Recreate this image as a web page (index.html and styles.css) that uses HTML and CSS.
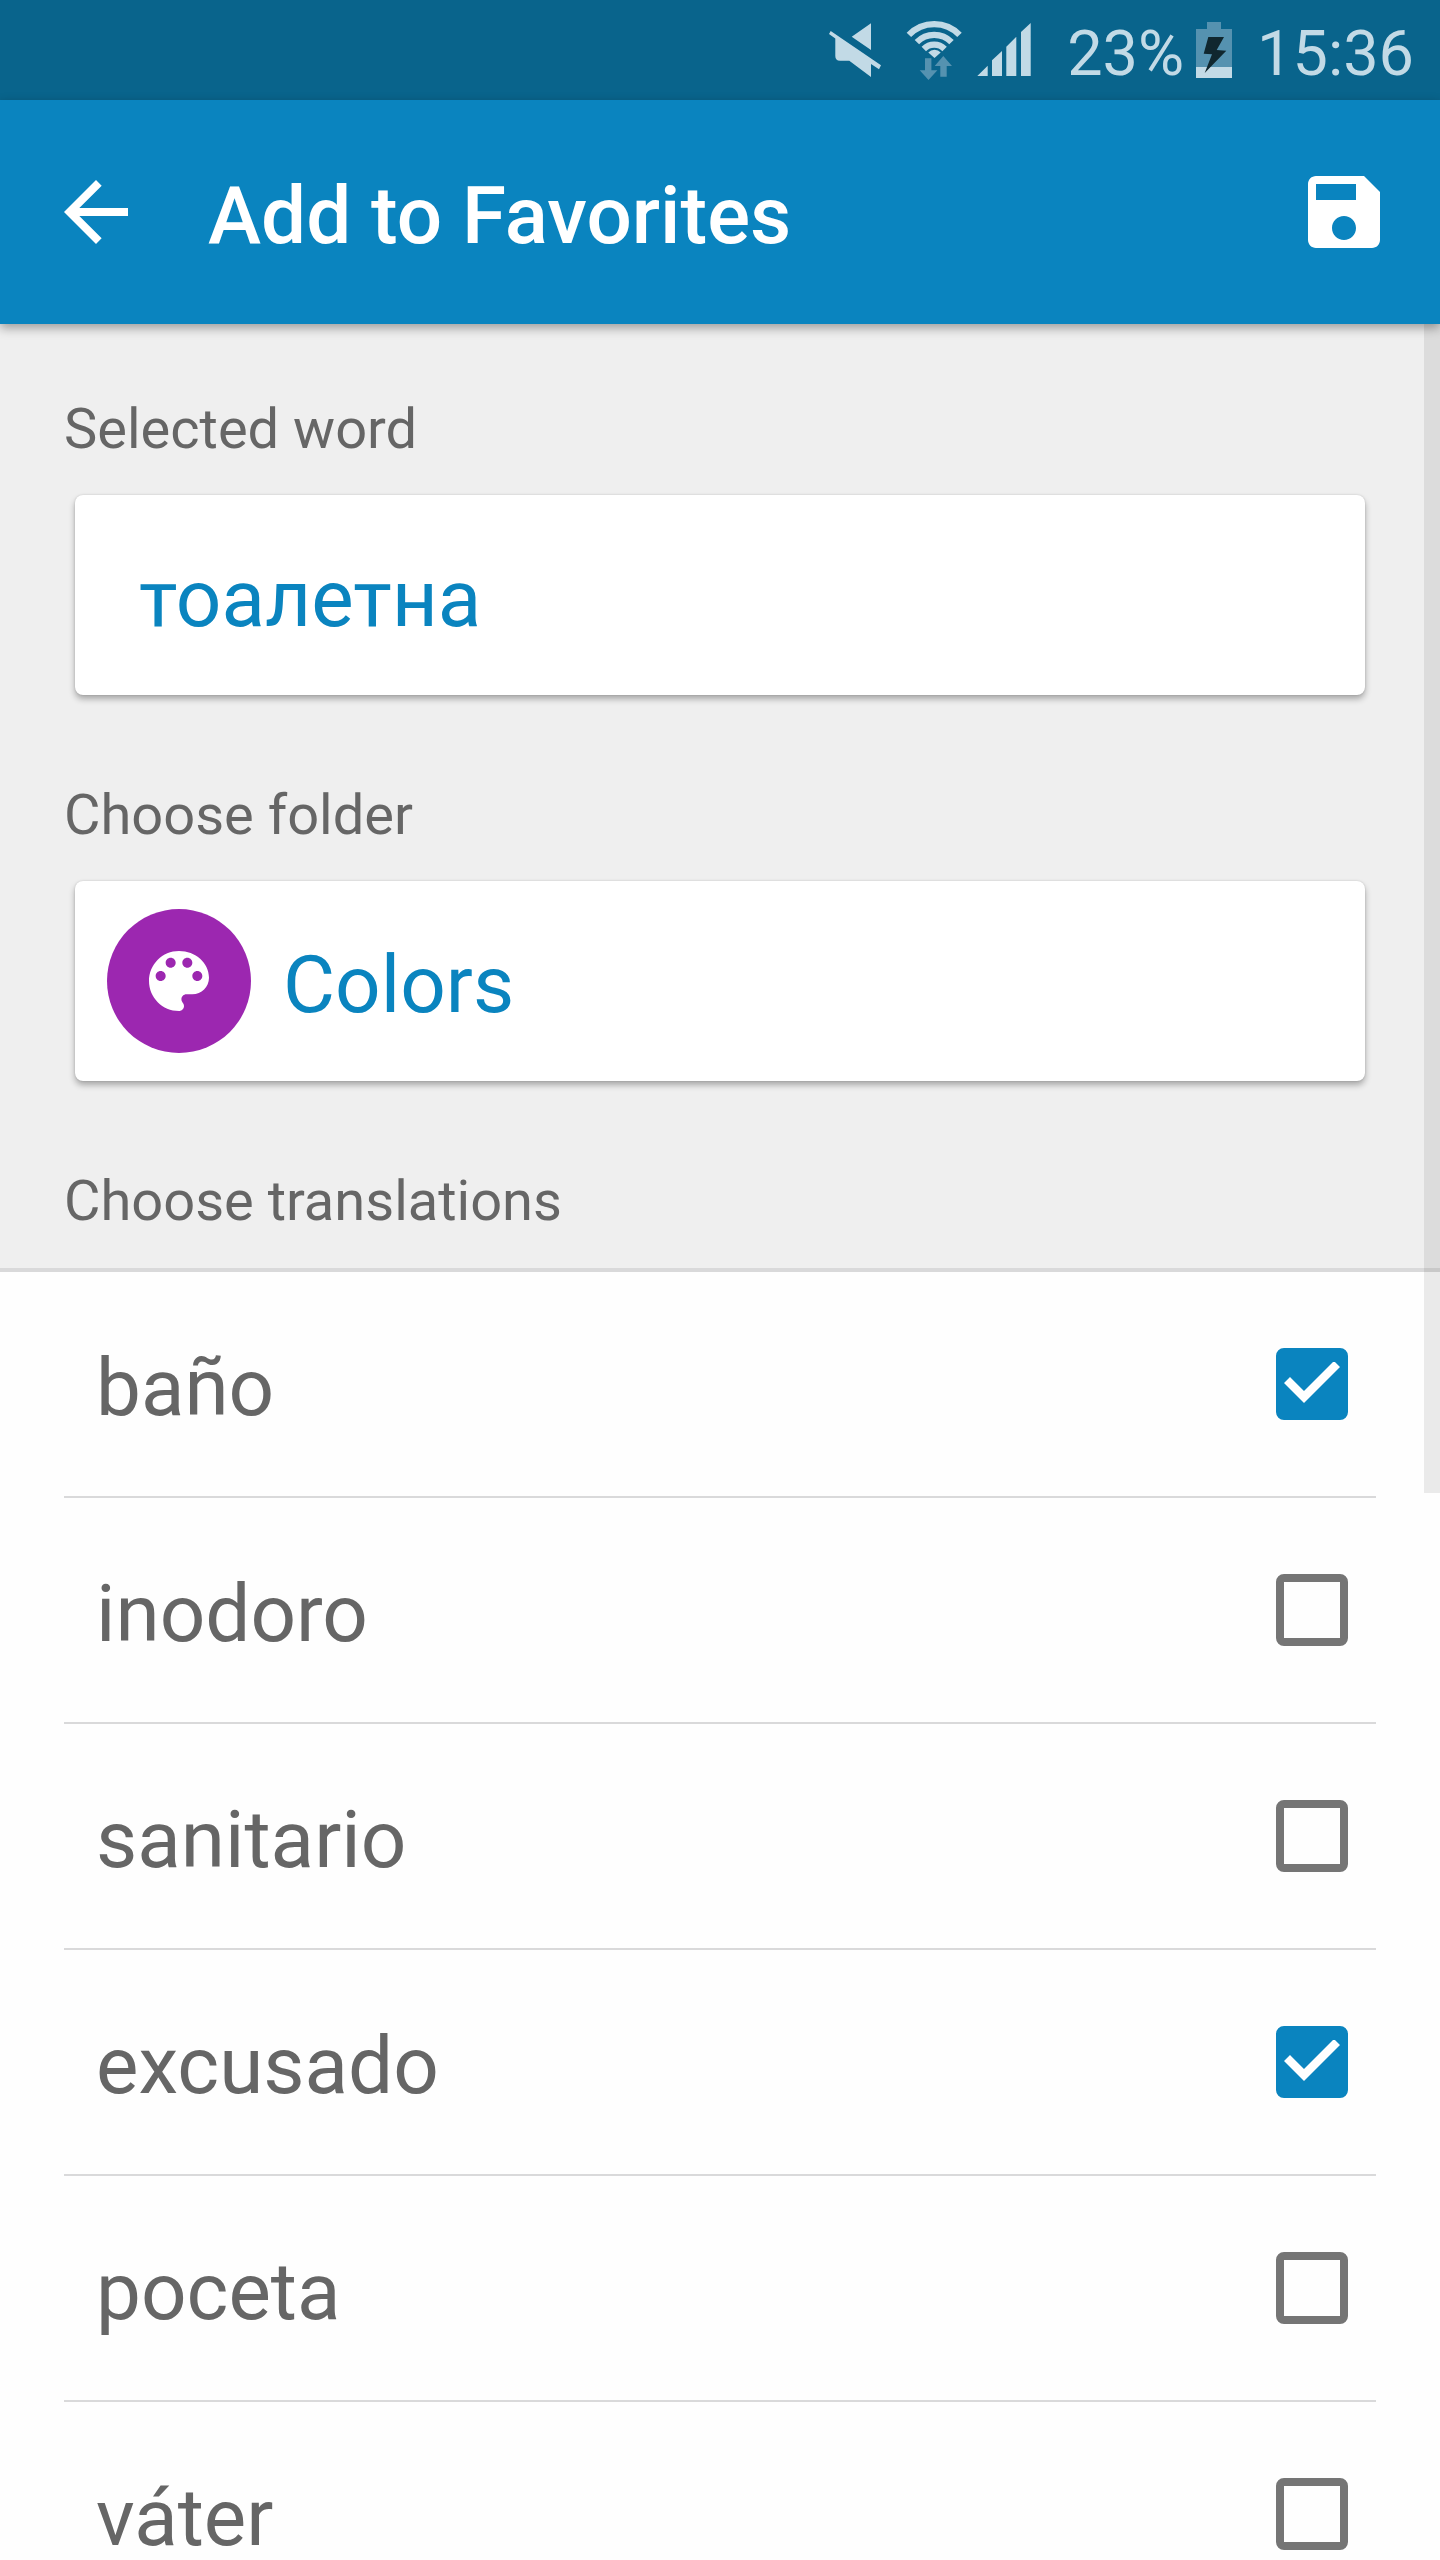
FILE: index.html
```html
<!DOCTYPE html>
<html lang="en">
<head>
<meta charset="utf-8">
<meta name="viewport" content="width=device-width, initial-scale=1">
<title>Add to Favorites</title>
<link rel="stylesheet" href="styles.css">
</head>
<body>
<div class="status-bar">
  <div class="status-icons">
    <svg width="54" height="60" viewBox="0 0 54 60" fill="currentColor" aria-hidden="true">
      <path d="M43 3.3V30L23.7 16.7zM2.7 11 53 45.3 51 49.3 43 44V57L21.3 40.7H12Q7.3 40.7 7.3 36V18.5L1 14z"/>
    </svg>
    <svg class="wifi" width="56" height="64" viewBox="0 0 56 64" aria-hidden="true">
      <g fill="none" stroke="currentColor" stroke-width="6.2">
        <path d="M2.9 16.9A35 35 0 0 1 53.5 16.9"/>
        <path d="M10.9 24.1A24.2 24.2 0 0 1 45.5 24.1"/>
        <path d="M17.8 31A14.6 14.6 0 0 1 38.6 31"/>
      </g>
      <path fill="currentColor" d="M28.5 40 22.3 34.6A8.4 8.4 0 0 1 34.7 34.6z"/>
      <path class="dim" d="M19 40.3h6.4v12h6L22.5 62l-8.8-9.700H19zM34.300 58.700V48h-5.600L37.300 38 46 48h-5.300v10.700z"/>
    </svg>
    <svg class="signal" width="54" height="54" viewBox="0 0 54 54" fill="currentColor" aria-hidden="true">
      <path d="M.3 53 10.700 42.700V53zM15 37.300 25 28V53H15zM29.300 23.700 39.300 13.700V53h-10zM44 9 53.700 0V53H44z"/>
    </svg>
  </div>
  <span class="status-text">23%</span>
  <svg class="battery" width="36" height="58" viewBox="0 0 36 58" aria-hidden="true">
    <path class="dim" d="M11 1h14v7h11v38H0V8h11z"/>
    <path fill="currentColor" d="M0 46h36v11H0z"/>
    <path class="bolt" d="M12.300 16H28L20.700 29l9.600.7L8.700 52 16 33.300l-8.300-.6z"/>
  </svg>
  <span class="status-text">15:36</span>
</div>

<header class="app-bar">
  <button class="icon-button" type="button" aria-label="Back">
    <svg width="96" height="96" viewBox="0 0 24 24" fill="currentColor" aria-hidden="true"><path d="M20 11H7.830l5.590-5.590L12 4l-8 8 8 8 1.410-1.410L7.830 13H20v-2z"/></svg>
  </button>
  <h1 class="title">Add to Favorites</h1>
  <button class="icon-button" type="submit" form="favorite" aria-label="Save">
    <svg width="96" height="96" viewBox="0 0 24 24" fill="currentColor" aria-hidden="true"><path d="M17 3H5c-1.110 0-2 .9-2 2v14c0 1.100.89 2 2 2h14c1.100 0 2-.9 2-2V7l-4-4zm-5 16c-1.660 0-3-1.340-3-3s1.340-3 3-3 3 1.340 3 3-1.340 3-3 3zm3-10H5V5h10v4z"/></svg>
  </button>
</header>

<main class="content">
  <form id="favorite">
    <div class="fields">
      <label class="label" for="word">Selected word</label>
      <div class="card card-word">
        <input class="field" id="word" type="text" value="тоалетна">
      </div>
      <label class="label" for="folder">Choose folder</label>
      <div class="card card-folder">
        <span class="folder-icon">
          <svg width="80" height="80" viewBox="0 0 24 24" fill="currentColor" aria-hidden="true"><path d="M12 3c-4.970 0-9 4.030-9 9s4.030 9 9 9c.83 0 1.500-.67 1.500-1.500 0-.39-.15-.74-.39-1.010-.23-.26-.38-.61-.38-.99 0-.83.67-1.500 1.500-1.500H16c2.760 0 5-2.240 5-5 0-4.420-4.030-8-9-8zm-5.500 9c-.83 0-1.500-.67-1.500-1.500S5.670 9 6.500 9 8 9.670 8 10.500 7.330 12 6.500 12zm3-4C8.670 8 8 7.330 8 6.500S8.670 5 9.500 5s1.500.67 1.500 1.500S10.330 8 9.500 8zm5 0c-.83 0-1.500-.67-1.500-1.500S13.670 5 14.500 5s1.500.67 1.500 1.500S15.330 8 14.500 8zm3 4c-.83 0-1.500-.67-1.500-1.500S16.670 9 17.500 9s1.500.67 1.500 1.500-.67 1.500-1.500 1.500z"/></svg>
        </span>
        <select class="field" id="folder">
          <option>Colors</option>
        </select>
      </div>
      <h2 class="label label-last">Choose translations</h2>
    </div>
    <ul class="translations">
      <li><label class="row"><span class="row-text">baño</span><input class="check" type="checkbox" checked></label></li>
      <li><label class="row"><span class="row-text">inodoro</span><input class="check" type="checkbox"></label></li>
      <li><label class="row"><span class="row-text">sanitario</span><input class="check" type="checkbox"></label></li>
      <li><label class="row"><span class="row-text">excusado</span><input class="check" type="checkbox" checked></label></li>
      <li><label class="row"><span class="row-text">poceta</span><input class="check" type="checkbox"></label></li>
      <li><label class="row"><span class="row-text">váter</span><input class="check" type="checkbox"></label></li>
    </ul>
  </form>
  <div class="scroll-thumb"></div>
</main>
</body>
</html>
```
FILE: styles.css
```css
:root {
  --primary: #0a84bf;
  --primary-dark: #09648c;
  --status: #c2dae6;
  --text: #666;
  --divider: #d9d9da;
}

* {
  box-sizing: border-box;
}

body {
  margin: 0;
  height: 100vh;
  display: flex;
  flex-direction: column;
  overflow: hidden;
  background: #fefefe;
  color: var(--text);
  font-family: Roboto, "Noto Sans", sans-serif;
  font-size: 80px;
  line-height: 94px;
}

.status-bar {
  flex: none;
  height: 100px;
  padding-right: 26px;
  display: flex;
  align-items: center;
  justify-content: flex-end;
  background: var(--primary-dark);
  color: var(--status);
}

.status-icons {
  display: flex;
  align-items: center;
  margin-right: 36px;
}

.wifi {
  margin: 0 15px 0 24px;
}

.battery {
  margin: 0 25px 0 12px;
}

.dim {
  fill: #5592b0;
}

.bolt {
  fill: #10272f;
}

.status-text {
  padding-top: 8px;
  font-size: 63px;
  line-height: 76px;
}

.app-bar {
  position: relative;
  z-index: 1;
  flex: none;
  height: 224px;
  padding: 0 48px;
  display: flex;
  align-items: center;
  background: var(--primary);
  color: #fff;
  box-shadow: 0 4px 10px rgba(0, 0, 0, .35);
}

.icon-button {
  display: flex;
  padding: 0;
  border: 0;
  background: none;
  color: inherit;
  cursor: pointer;
}

.title {
  flex: 1;
  margin: 0 0 0 64px;
  padding-top: 8px;
  font-size: 80px;
  font-weight: 500;
}

.content {
  position: relative;
  flex: 1;
  min-height: 0;
  overflow: hidden;
}

.fields {
  padding: 72px 75px 34px;
  border-bottom: 4px solid var(--divider);
  background: #efefef;
}

.label {
  display: block;
  margin: 0 0 33px -11px;
  font-size: 56px;
  font-weight: 400;
  line-height: 66px;
}

.label-last {
  margin-bottom: 0;
}

.card {
  min-height: 200px;
  margin-bottom: 87px;
  display: flex;
  align-items: center;
  gap: 32px;
  border-radius: 8px;
  background: #fff;
  box-shadow: 0 4px 6px rgba(0, 0, 0, .3), 0 0 2px rgba(0, 0, 0, .16);
}

.card-word {
  padding: 28px 64px;
}

.card-folder {
  padding: 28px 32px;
}

.folder-icon {
  flex: none;
  width: 144px;
  height: 144px;
  display: flex;
  align-items: center;
  justify-content: center;
  border-radius: 50%;
  background: #9c27b0;
  color: #fff;
}

.field {
  flex: 1;
  min-width: 0;
  margin: 0;
  padding: 8px 0 0;
  border: 0;
  outline: 0;
  appearance: none;
  background: none;
  color: var(--primary);
  font: inherit;
}

.translations {
  margin: 0;
  padding: 0 64px;
  list-style: none;
}

.row {
  height: 226px;
  padding: 0 28px 0 32px;
  display: flex;
  align-items: center;
  justify-content: space-between;
  border-bottom: 2px solid var(--divider);
}

.row-text {
  padding-top: 8px;
}

.check {
  flex: none;
  width: 72px;
  height: 72px;
  margin: 0;
  display: grid;
  appearance: none;
  border: 8px solid #757575;
  border-radius: 8px;
}

.check:checked {
  border-color: var(--primary);
  background: var(--primary);
}

.check:checked::before {
  content: "";
  width: 56px;
  height: 42px;
  margin-top: 6px;
  background: #fff;
  clip-path: polygon(0 21px, 6px 15px, 20px 29px, 50px -1px, 56px 5px, 20px 41px);
}

.scroll-thumb {
  position: absolute;
  top: 0;
  right: 0;
  width: 16px;
  height: 1169px;
  background: rgba(0, 0, 0, .08);
}
```
